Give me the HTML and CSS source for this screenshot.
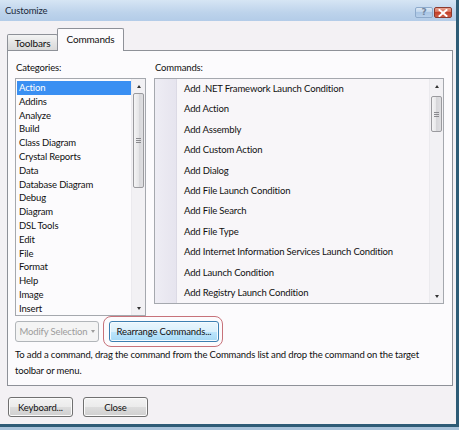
FILE: index.html
```html
<!DOCTYPE html>
<html>
<head>
<meta charset="utf-8">
<title>Customize</title>
<link rel="stylesheet" href="styles.css">
</head>
<body>
<div class="window">
  <div class="titlebar">
    <span class="title">Customize</span>
    <div class="caption">
      <div class="cap-btn help">?</div>
      <div class="cap-btn close">
        <svg width="10" height="8" viewBox="0 0 10 8"><path d="M1.5 1 L8.5 7 M8.5 1 L1.5 7" stroke="#fff" stroke-width="2" stroke-linecap="square"/></svg>
      </div>
    </div>
  </div>
  <div class="content">
    <div class="tabs">
      <div class="tab">Toolbars</div>
      <div class="tab active">Commands</div>
    </div>
    <div class="panel">
      <div class="lists">
        <div class="col col-cat">
          <div class="label">Categories:</div>
          <div class="listbox cat-box">
            <ul class="items cat-items">
              <li class="selected">Action</li>
              <li>Addins</li>
              <li>Analyze</li>
              <li>Build</li>
              <li>Class Diagram</li>
              <li>Crystal Reports</li>
              <li>Data</li>
              <li>Database Diagram</li>
              <li>Debug</li>
              <li>Diagram</li>
              <li>DSL Tools</li>
              <li>Edit</li>
              <li>File</li>
              <li>Format</li>
              <li>Help</li>
              <li>Image</li>
              <li>Insert</li>
            </ul>
            <div class="scrollbar">
              <div class="arrow up"></div>
              <div class="track">
                <div class="thumb thumb-cat"><span class="grip"></span></div>
              </div>
              <div class="arrow down"></div>
            </div>
          </div>
        </div>
        <div class="col col-cmd">
          <div class="label">Commands:</div>
          <div class="listbox cmd-box">
            <div class="gutter"></div>
            <ul class="items cmd-items">
              <li>Add .NET Framework Launch Condition</li>
              <li>Add Action</li>
              <li>Add Assembly</li>
              <li>Add Custom Action</li>
              <li>Add Dialog</li>
              <li>Add File Launch Condition</li>
              <li>Add File Search</li>
              <li>Add File Type</li>
              <li>Add Internet Information Services Launch Condition</li>
              <li>Add Launch Condition</li>
              <li>Add Registry Launch Condition</li>
            </ul>
            <div class="scrollbar">
              <div class="arrow up"></div>
              <div class="track">
                <div class="thumb thumb-cmd"><span class="grip"></span></div>
              </div>
              <div class="arrow down"></div>
            </div>
          </div>
        </div>
      </div>
      <div class="actions">
        <button class="btn btn-modify" disabled>Modify Selection <span class="dd"></span></button>
        <div class="highlight">
          <button class="btn btn-focus btn-rearrange">Rearrange Commands...</button>
        </div>
      </div>
      <p class="hint">To add a command, drag the command from the Commands list and drop the command on the target toolbar or menu.</p>
    </div>
    <div class="footer">
      <button class="btn btn-foot">Keyboard...</button>
      <button class="btn btn-foot">Close</button>
    </div>
  </div>
</div>
</body>
</html>
```

FILE: styles.css
```css
* { box-sizing: border-box; margin: 0; padding: 0; }
html, body { width: 459px; height: 430px; overflow: hidden; }
body {
  background: #a9c3da;
  font-family: Lato, "Liberation Sans", sans-serif;
  font-size: 9.5px;
  letter-spacing: -0.15px;
  color: #101010;
}
.window {
  width: 459px;
  height: 427px;
  display: flex;
  flex-direction: column;
  background: #f3f1f4;
  border-right: 3px solid #2e5c76;
  border-bottom: 3px solid #2e5c76;
}
.titlebar {
  height: 21px;
  display: flex;
  align-items: center;
  padding-left: 5px;
  background: linear-gradient(#d6e5f4, #bdd3eb 60%, #b3cce8);
  flex-shrink: 0;
}
.title { font-size: 9.5px; color: #1c2a3a; }
.caption {
  margin-left: auto;
  align-self: flex-end;
  margin-bottom: 3px;
  margin-right: 4px;
  display: flex;
  gap: 1px;
}
.cap-btn {
  width: 18px;
  height: 11px;
  border-radius: 2px;
  display: flex;
  align-items: center;
  justify-content: center;
}
.help {
  background: linear-gradient(#dde9f5, #bcd2ea 50%, #a9c5e4 50%, #b8d0ea);
  border: 1px solid #8eaacb;
  color: #7387a0;
  font-family: "DejaVu Sans", sans-serif;
  font-size: 9px;
  font-weight: bold;
  line-height: 9px;
  letter-spacing: 0;
}
.close {
  background: linear-gradient(#e9a493, #d86a52 50%, #c4412a 50%, #d0604a);
  border: 1px solid #8c3a2d;
}
.content {
  flex: 1;
  padding: 0 0 0 7px;
  display: flex;
  flex-direction: column;
}
.tabs {
  height: 30px;
  display: flex;
  align-items: flex-end;
  margin-bottom: -1px;
}
.tab {
  height: 17px;
  width: 51px;
  border: 1px solid #8e9198;
  border-bottom: none;
  border-radius: 2px 2px 0 0;
  background: linear-gradient(#f4f4f4, #e4e4e4 50%, #d8d8d8);
  display: flex;
  align-items: center;
  justify-content: center;
  font-size: 10px;
}
.tab.active {
  position: relative;
  z-index: 1;
  height: 23px;
  width: 67px;
  margin-left: -1px;
  background: #fcfbfd;
  padding-bottom: 2px;
}
.panel {
  width: 446px;
  height: 336px;
  border: 1px solid #8e9198;
  background: #fcfbfd;
  padding: 10px 8px 0 7px;
  display: flex;
  flex-direction: column;
}
.lists { display: flex; gap: 8px; }
.col { display: flex; flex-direction: column; }
.col-cat { width: 131px; }
.col-cmd { width: 290px; }
.label { height: 14px; line-height: 14px; margin-bottom: 3px; padding-left: 1px; }
.listbox {
  border: 1px solid #a5a8ae;
  background: #fcfbfd;
  display: flex;
}
.cat-box { height: 238px; }
.cmd-box { height: 226px; background: #f8f6f9; }
.items { list-style: none; flex: 1; }
.cat-items { padding: 2px 0 0 1px; }
.cat-items li { height: 13.8px; line-height: 13.8px; padding-left: 2px; }
.cat-items li.selected { background: #3a8ff2; color: #fff; }
.gutter {
  width: 22px;
  background: linear-gradient(90deg, #eeedf4, #e6e4ee);
  border-right: 1px solid #dcdae5;
}
.cmd-items { padding: 0 0 0 7px; }
.cmd-items li { height: 20.4px; line-height: 20.4px; }
.scrollbar {
  width: 14px;
  display: flex;
  flex-direction: column;
  align-items: center;
  background: #f2f1f4;
  border-left: 1px solid #ebeaee;
}
.arrow {
  height: 14px;
  width: 13px;
  display: flex;
  align-items: center;
  justify-content: center;
  flex-shrink: 0;
}
.arrow::after {
  content: "";
  border-left: 2.5px solid transparent;
  border-right: 2.5px solid transparent;
}
.arrow.up::after { border-bottom: 3px solid #333; }
.arrow.down::after { border-top: 3px solid #333; }
.track { flex: 1; width: 100%; display: flex; flex-direction: column; align-items: center; }
.thumb {
  width: 11px;
  border: 1px solid #9a9a9e;
  border-radius: 2px;
  background: linear-gradient(90deg, #f4f4f5, #e6e6e8 50%, #d6d6d9 50%, #dfdfe2);
  display: flex;
  align-items: center;
  justify-content: center;
}
.thumb-cat { height: 95px; margin-top: 0; }
.thumb-cmd { height: 36px; margin-top: 3px; }
.grip {
  width: 5px;
  height: 5px;
  background: repeating-linear-gradient(#8a8a8e 0 1px, transparent 1px 2px);
}
.actions {
  display: flex;
  align-items: center;
  height: 31px;
}
.btn {
  font-family: Lato, "Liberation Sans", sans-serif;
  font-size: 9.5px;
  letter-spacing: -0.15px;
  color: #111;
  height: 21px;
  border: 1px solid #707070;
  border-radius: 3px;
  background: linear-gradient(#f3f3f3, #ebebeb 50%, #dddddd 50%, #cfcfcf);
  box-shadow: inset 0 0 0 1px #fbfbfb;
  display: flex;
  align-items: center;
  justify-content: center;
}
.btn-modify {
  width: 84px;
  color: #9c9c9c;
  border-color: #b1b5b9;
  background: #f4f4f4;
  box-shadow: none;
  gap: 3px;
}
.dd {
  border-left: 2.5px solid transparent;
  border-right: 2.5px solid transparent;
  border-top: 3px solid #9c9c9c;
}
.highlight {
  margin-left: 4px;
  border: 1px solid #c7727a;
  border-radius: 8px;
  padding: 4px 3px 4px 5px;
}
.btn-focus {
  border-color: #3c7fb1;
  background: linear-gradient(#eaf6fd, #d9f0fc 50%, #bee6fd 50%, #a7d9f5);
  box-shadow: inset 0 0 0 1px #f4fbff;
}
.btn-rearrange { width: 110px; }
.hint { line-height: 16px; }
.footer {
  display: flex;
  gap: 10px;
  margin-top: 11px;
  margin-left: 1px;
}
.btn-foot { width: 65px; height: 20px; }
```
